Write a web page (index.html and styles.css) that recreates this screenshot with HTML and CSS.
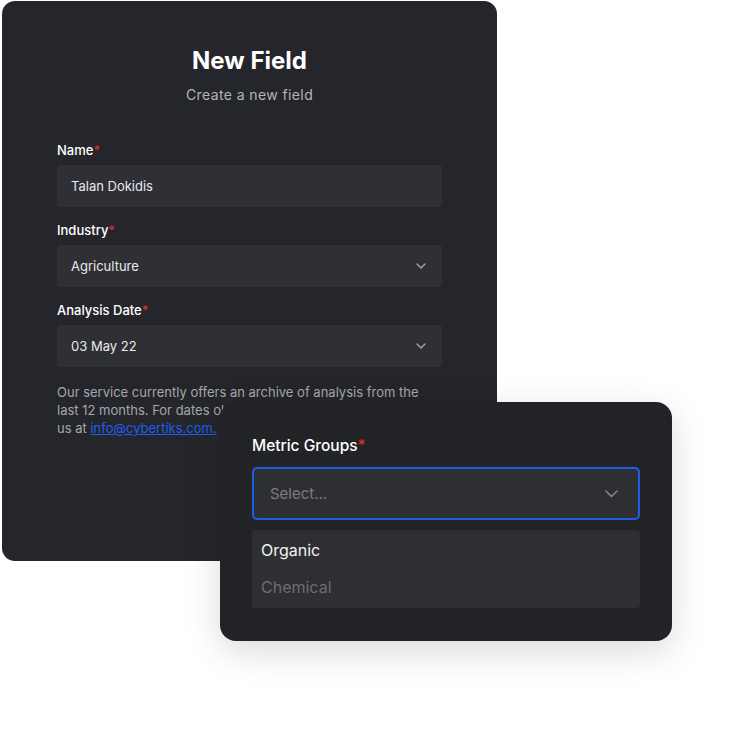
FILE: index.html
```html
<!DOCTYPE html>
<html lang="en">
<head>
  <meta charset="UTF-8" />
  <meta name="viewport" content="width=device-width, initial-scale=1.0" />
  <title>New Field</title>
  <link rel="stylesheet" href="styles.css">
</head>
<body>

<div class="stage">

  <section class="card">
    <h1 class="card-title">New Field</h1>
    <p class="card-subtitle">Create a new field</p>

    <div class="field">
      <label class="label">Name<span class="req">*</span></label>
      <div class="input">Talan Dokidis</div>
    </div>

    <div class="field">
      <label class="label">Industry<span class="req">*</span></label>
      <div class="input select">
        <span>Agriculture</span>
        <svg class="chevron" width="10" height="6" viewBox="0 0 10 6"><path d="M1 1l4 4 4-4" fill="none" stroke="#a3a4a8" stroke-width="1.4" stroke-linecap="round" stroke-linejoin="round"/></svg>
      </div>
    </div>

    <div class="field">
      <label class="label">Analysis Date<span class="req">*</span></label>
      <div class="input select">
        <span>03 May 22</span>
        <svg class="chevron" width="10" height="6" viewBox="0 0 10 6"><path d="M1 1l4 4 4-4" fill="none" stroke="#a3a4a8" stroke-width="1.4" stroke-linecap="round" stroke-linejoin="round"/></svg>
      </div>
    </div>

    <p class="note">
      Our service currently offers an archive of analysis from the<br>
      last 12 months. For dates older than that please contact<br>
      us at <a href="#">info@cybertiks.com.</a>
    </p>
  </section>

  <section class="popover">
    <label class="label big">Metric Groups<span class="req">*</span></label>
    <div class="picker">
      <span class="placeholder">Select...</span>
      <svg width="13" height="8" viewBox="0 0 13 8"><path d="M1 1l5.5 5.5L12 1" fill="none" stroke="#85868a" stroke-width="1.5" stroke-linecap="round" stroke-linejoin="round"/></svg>
    </div>
    <ul class="options">
      <li class="option">Organic</li>
      <li class="option muted">Chemical</li>
    </ul>
  </section>

</div>

</body>
</html>
```

FILE: styles.css
```css
body {
  margin: 0;
  background: #ffffff;
  font-family: Inter, "Noto Sans", sans-serif;
  color: #ffffff;
}

.stage {
  position: relative;
  width: 733px;
  height: 729px;
  overflow: hidden;
}

.card {
  box-sizing: border-box;
  width: 495px;
  height: 560px;
  margin: 1px 0 0 2px;
  padding: 45px 55px 0;
  background: #25262b;
  border-radius: 13px;
}

.card-title {
  margin: 0;
  text-align: center;
  font-size: 24px;
  line-height: 30px;
  font-weight: 700;
}

.card-subtitle {
  margin: 9px 0 36px;
  text-align: center;
  font-size: 14px;
  line-height: 20px;
  letter-spacing: 0.4px;
  color: #b4b5b9;
}

.field {
  margin-bottom: 14px;
}

.label {
  display: block;
  margin-bottom: 6px;
  font-size: 13px;
  line-height: 18px;
  font-weight: 500;
}

.req {
  color: #d0342c;
}

.input {
  box-sizing: border-box;
  height: 42px;
  padding: 0 14px;
  display: flex;
  align-items: center;
  background: #2f3035;
  border-radius: 4px;
  font-size: 13px;
  color: #e9e9ec;
}

.select {
  justify-content: space-between;
  padding-right: 16px;
}

.note {
  margin: 16px 0 0;
  font-size: 13px;
  line-height: 18px;
  color: #a6a7ab;
  white-space: nowrap;
}

.note a {
  color: #1f5ef0;
}

/* overlay card */
.popover {
  position: absolute;
  left: 220px;
  top: 402px;
  box-sizing: border-box;
  width: 452px;
  height: 239px;
  padding: 34px 32px 0;
  background: #222327;
  border-radius: 16px;
  box-shadow: 0 10px 36px rgba(0, 0, 0, 0.15);
}

.label.big {
  font-size: 15.5px;
  line-height: 20px;
  margin-bottom: 11px;
}

.picker {
  box-sizing: border-box;
  height: 53px;
  padding: 0 20px 0 16px;
  display: flex;
  align-items: center;
  justify-content: space-between;
  background: #2e2f33;
  border: 2px solid #1f5ce6;
  border-radius: 5px;
}

.placeholder {
  font-size: 15px;
  color: #7b7c80;
}

.options {
  list-style: none;
  margin: 10px 0 0;
  padding: 2px 9px;
  background: #2e2f33;
  border-radius: 4px;
}

.option {
  height: 37px;
  line-height: 37px;
  font-size: 16px;
  color: #f2f2f4;
}

.option.muted {
  color: #6c6d72;
}
```
